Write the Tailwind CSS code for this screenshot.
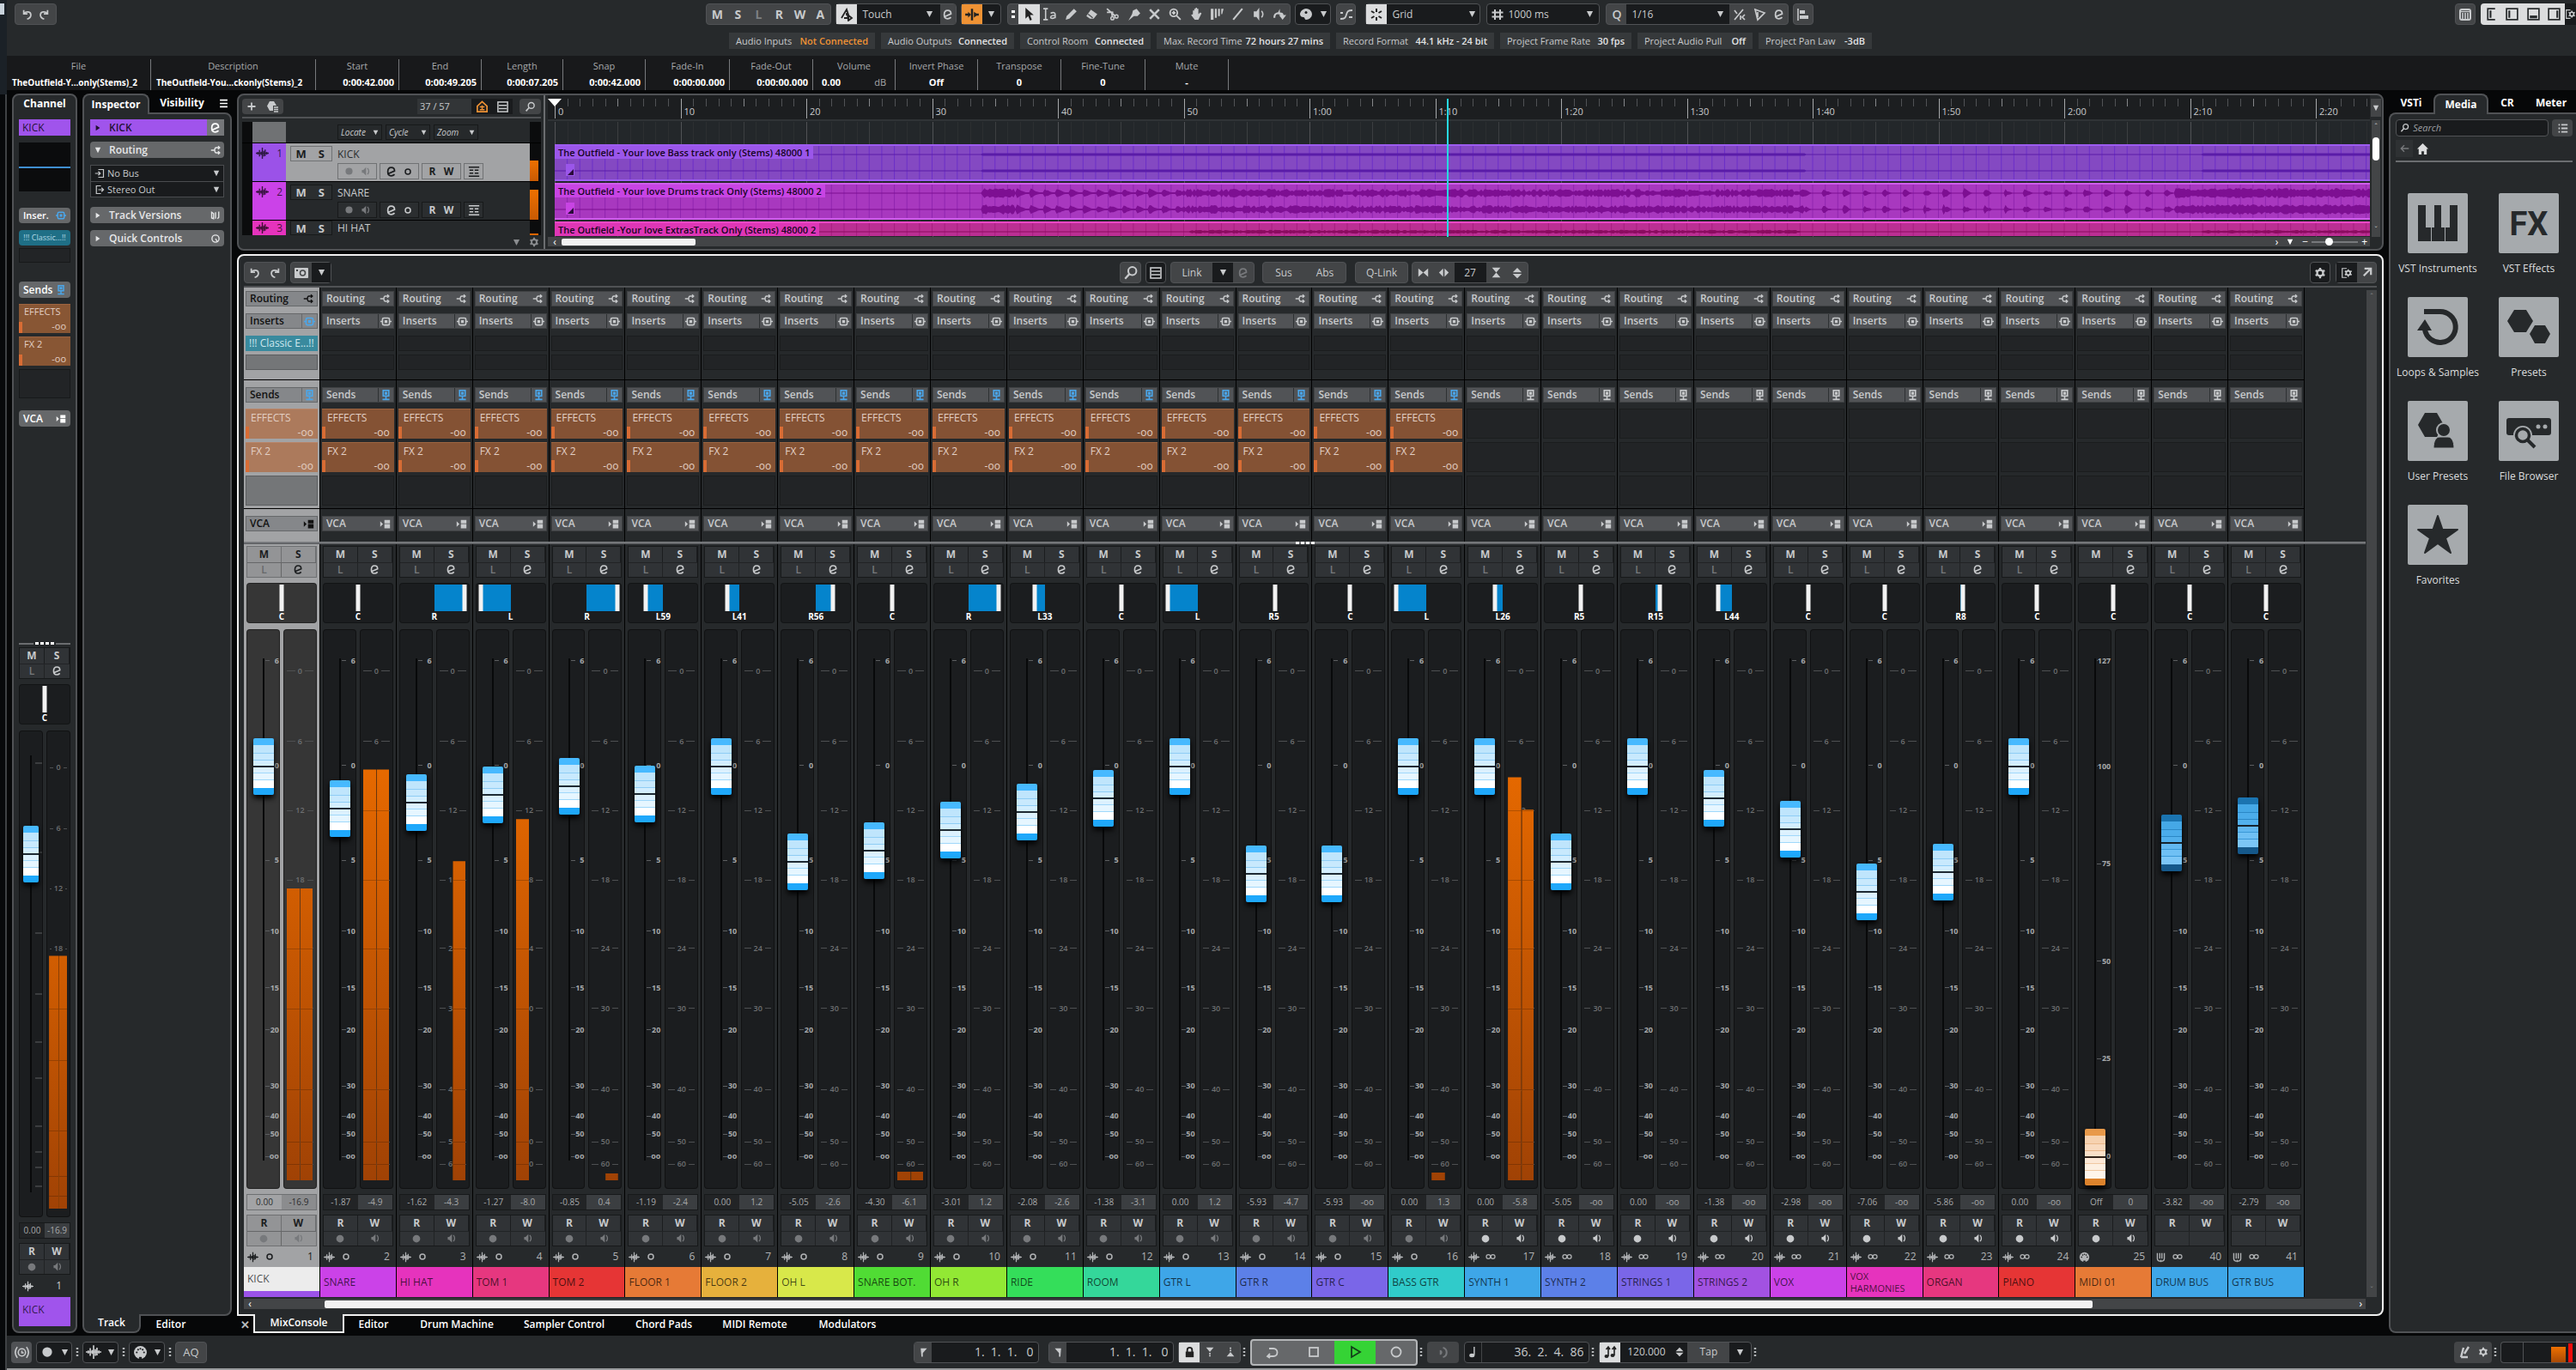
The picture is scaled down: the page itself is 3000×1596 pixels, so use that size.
<!DOCTYPE html>
<html lang="en">
<head>
    <meta charset="UTF-8">
    <meta name="viewport" content="width=device-width, initial-scale=1.0">
    <title>MixConsole</title>
    <script src="https://cdn.jsdelivr.net/npm/@tailwindcss/browser@4"></script>
</head>
<body class="flex h-screen min-h-[1100px] overflow-hidden bg-[#060708] font-['Open_Sans','Noto_Sans',sans-serif] text-[12px] leading-4 text-[#c8cacc]">

    <!-- Icon set -->
    <svg width="0" height="0" class="absolute" aria-hidden="true">
        <symbol id="undo" viewBox="0 0 16 16"><path d="M3 2v5h5M3.500 6.500C6 3.500 12.500 3.500 12.500 8.500c0 3-2 4.500-5 5.500" fill="none" stroke="currentColor" stroke-width="2"/></symbol>
        <symbol id="redo" viewBox="0 0 16 16"><path d="M13 2v5H8M12.500 6.500C10 3.500 3.500 3.500 3.500 8.500c0 3 2 4.500 5 5.500" fill="none" stroke="currentColor" stroke-width="2"/></symbol>
        <symbol id="edit" viewBox="0 0 16 16"><path d="M4 10.500l8-3.500c0-3-2-4.500-4.300-4.500C4.800 2.500 3 5 3 8.300s1.800 5.200 4.500 5.200c2 0 3.300-.8 4.500-2" fill="none" stroke="currentColor" stroke-width="2"/></symbol>
        <symbol id="down" viewBox="0 0 10 10"><path d="M1 1h8L5 9z" fill="currentColor"/></symbol>
        <symbol id="right" viewBox="0 0 10 10"><path d="M2 1v8l6-4z" fill="currentColor"/></symbol>
        <symbol id="auto" viewBox="0 0 16 16"><path d="M2 12L8 2l3 9M5 12h6M8 6v3M9 8l5 4-4 3z" fill="none" stroke="currentColor" stroke-width="1.800"/></symbol>
        <symbol id="scroll" viewBox="0 0 16 16"><path d="M8 2v12M1 8h4M11 8h4" stroke="currentColor" stroke-width="2.200"/><path d="M4 5l3 3-3 3zM10 5l4 3-4 3z" fill="currentColor"/></symbol>
        <symbol id="pointer" viewBox="0 0 16 16"><path d="M4 1v12l3-3 2 5 2-1-2-5h4z" fill="currentColor"/></symbol>
        <symbol id="range" viewBox="0 0 16 16"><path d="M1 2h5M1 14h5M3.500 2v12" stroke="currentColor" stroke-width="1.500"/><path d="M9 7c3-1.500 5-.5 5 1.500v4M14 9.500c-3-.5-5 .5-5 2s3.500 1.500 5-.5" fill="none" stroke="currentColor" stroke-width="1.500"/></symbol>
        <symbol id="pencil" viewBox="0 0 16 16"><path d="M2 14l1-4 8-8 3 3-8 8z" fill="currentColor"/></symbol>
        <symbol id="eraser" viewBox="0 0 16 16"><path d="M7 3l7 5-4 5H6L2 10z" fill="currentColor"/><path d="M4 8l5 4" stroke="#434547" stroke-width="1.200"/></symbol>
        <symbol id="scissors" viewBox="0 0 16 16"><path d="M2 2l9 8M2 6l7 0M7 5l1 6" stroke="currentColor" stroke-width="1.800" fill="none"/><circle cx="8" cy="12.500" r="1.700" fill="none" stroke="currentColor" stroke-width="1.400"/><circle cx="12.500" cy="10.500" r="1.700" fill="none" stroke="currentColor" stroke-width="1.400"/></symbol>
        <symbol id="glue" viewBox="0 0 16 16"><path d="M7 4l4-2 4 5-3 3H8L2 15l4-7z" fill="currentColor"/></symbol>
        <symbol id="cross" viewBox="0 0 16 16"><path d="M3 3l10 10M13 3L3 13" stroke="currentColor" stroke-width="2.400"/></symbol>
        <symbol id="zoom" viewBox="0 0 16 16"><circle cx="6.500" cy="6.500" r="4" fill="none" stroke="currentColor" stroke-width="1.800"/><path d="M9.500 9.500L14 14M4.500 6.500h4M6.500 4.500v4" stroke="currentColor" stroke-width="1.800"/></symbol>
        <symbol id="hand" viewBox="0 0 16 16"><path d="M4 8V4h1.500v3V2H7v5V1h1.500v6V2H10v6l2-2 1.500 1L10 14H6L2 9z" fill="currentColor"/></symbol>
        <symbol id="comp" viewBox="0 0 16 16"><path d="M1 2h3v12H1zM5.500 2h2v10h-2zM9 2h2v8H9zM12.500 2H15l-1.500 6h-1z" fill="currentColor"/></symbol>
        <symbol id="line" viewBox="0 0 16 16"><path d="M3 14L13 2" stroke="currentColor" stroke-width="2"/></symbol>
        <symbol id="speaker" viewBox="0 0 16 16"><path d="M2 5h3l3-4v14l-3-4H2z" fill="currentColor"/><path d="M10.500 4.500c2 2 2 5 0 7" fill="none" stroke="currentColor" stroke-width="1.500"/></symbol>
        <symbol id="warp" viewBox="0 0 16 16"><path d="M1 12c0-4 2-6 5-6l2-4v4c3 0 4 1 4 3h3l-4 5-4-5h2c-4-2-6-1-6 3z" fill="currentColor"/></symbol>
        <symbol id="palette" viewBox="0 0 16 16"><path d="M8 1a7 6.500 0 0 1 0 13c-2 0-1-3-3-3s-4-1-4-3.500S4 1 8 1z" fill="currentColor"/><circle cx="8" cy="5.500" r="1.500" fill="#191b1d"/></symbol>
        <symbol id="cross2" viewBox="0 0 16 16"><path d="M1 13c5 0 6-1 7-5s2-5 7-5M1 6h3M11 11h4" fill="none" stroke="currentColor" stroke-width="1.800"/></symbol>
        <symbol id="snap" viewBox="0 0 16 16"><path d="M8 1v4M8 11v4M2 4l3.500 2M14 4l-3.500 2M2 12l3.500-2M14 12l-3.500-2" stroke="currentColor" stroke-width="2"/></symbol>
        <symbol id="hash" viewBox="0 0 16 16"><path d="M5 2v12M11 2v12M1.500 5.500h13M1.500 10.500h13" stroke="currentColor" stroke-width="2"/></symbol>
        <symbol id="slash" viewBox="0 0 16 16"><path d="M2 14L12 2M2 3l3 4M9 9v5M14 8l-3 3 3 3" stroke="currentColor" stroke-width="1.700" fill="none"/></symbol>
        <symbol id="tri" viewBox="0 0 16 16"><path d="M3 2l11 4-8 8zM6 5v6" fill="none" stroke="currentColor" stroke-width="1.700"/></symbol>
        <symbol id="align" viewBox="0 0 16 16"><path d="M2 1v14" stroke="currentColor" stroke-width="1.600"/><path d="M4 3h6v4H4zM4 9h10v4H4z" fill="currentColor"/></symbol>
        <symbol id="keys" viewBox="0 0 16 16"><rect x="2" y="2" width="12" height="12" rx="2" fill="none" stroke="currentColor" stroke-width="2"/><path d="M5 6v7M8 6v7M11 6v7M3 4.500h10" stroke="currentColor" stroke-width="1.600"/></symbol>
        <symbol id="zoneL" viewBox="0 0 16 16"><path d="M12 2H4v12h8" fill="none" stroke="currentColor" stroke-width="1.600"/><path d="M7 4v8" stroke="currentColor" stroke-width="2"/></symbol>
        <symbol id="zoneI" viewBox="0 0 16 16"><rect x="2" y="2" width="12" height="12" fill="none" stroke="currentColor" stroke-width="1.600"/><path d="M5 4v8" stroke="currentColor" stroke-width="2"/></symbol>
        <symbol id="zoneB" viewBox="0 0 16 16"><rect x="2" y="2" width="12" height="12" fill="none" stroke="currentColor" stroke-width="1.600"/><path d="M4 11h8" stroke="currentColor" stroke-width="3"/></symbol>
        <symbol id="zoneR" viewBox="0 0 16 16"><rect x="2" y="2" width="12" height="12" fill="none" stroke="currentColor" stroke-width="1.600"/><path d="M11.500 4v8" stroke="currentColor" stroke-width="2"/></symbol>
        <symbol id="gear" viewBox="0 0 16 16"><circle cx="8" cy="8" r="4" fill="none" stroke="currentColor" stroke-width="2.600"/><path d="M8 1v3M8 12v3M2 4.500L4.500 6M11.500 10l2.500 1.500M2 11.500L4.500 10M11.500 6L14 4.500" stroke="currentColor" stroke-width="2.600"/></symbol>
        <symbol id="panelgear" viewBox="0 0 16 16"><path d="M8 2H2v12h6" fill="none" stroke="currentColor" stroke-width="1.400"/><circle cx="10" cy="8" r="2.800" fill="none" stroke="currentColor" stroke-width="2"/><path d="M10 3v2M10 11v2M5.500 5.500l2 1M12.500 9.500l2 1M5.500 10.500l2-1M12.500 6.500l2-1" stroke="currentColor" stroke-width="1.800"/></symbol>
        <symbol id="search" viewBox="0 0 16 16"><circle cx="9.500" cy="6" r="4.200" fill="none" stroke="currentColor" stroke-width="1.800"/><path d="M6.500 9L2 14" stroke="currentColor" stroke-width="2"/></symbol>
        <symbol id="list" viewBox="0 0 16 16"><rect x="2" y="2" width="12" height="12" fill="none" stroke="currentColor" stroke-width="1.600"/><path d="M3 6h10M3 10h10" stroke="currentColor" stroke-width="1.600"/></symbol>
        <symbol id="bullets" viewBox="0 0 16 16"><path d="M2 3h2M2 8h2M2 13h2M6 3h9M6 8h9M6 13h9" stroke="currentColor" stroke-width="2.200"/></symbol>
        <symbol id="lanes" viewBox="0 0 16 16"><path d="M1 2h14M1 14h14M2 6h5M9 6h5M2 10h5M9 10h5" stroke="currentColor" stroke-width="1.800"/></symbol>
        <symbol id="agent" viewBox="0 0 16 16"><path d="M2 14V7l6-5.500L14 7v7z" fill="none" stroke="currentColor" stroke-width="1.800"/><path d="M5 8h6M8 6v6M5 11.500h6" stroke="currentColor" stroke-width="1.500"/></symbol>
        <symbol id="preset" viewBox="0 0 16 16"><path d="M5 2h5l3 5H9v6H5L2 7.500z" fill="currentColor"/><path d="M10 9h5M10 11.500h5M10 14h5" stroke="currentColor" stroke-width="1.400"/></symbol>
        <symbol id="plus" viewBox="0 0 16 16"><path d="M8 2v12M2 8h12" stroke="currentColor" stroke-width="2.400"/></symbol>
        <symbol id="wave" viewBox="0 0 16 16"><path d="M0 8h16M2.500 6.500v3M4.500 4v8M6.500 6v4M8 1v14M9.800 5v7M11.500 3.500v8M13.500 6.500v3" stroke="currentColor" stroke-width="1.500"/></symbol>
        <symbol id="dot" viewBox="0 0 16 16"><circle cx="8" cy="8" r="5" fill="currentColor"/></symbol>
        <symbol id="mono" viewBox="0 0 16 16"><circle cx="8" cy="8" r="4" fill="none" stroke="currentColor" stroke-width="2"/></symbol>
        <symbol id="stereo" viewBox="0 0 16 16"><circle cx="4.500" cy="8" r="3.200" fill="none" stroke="currentColor" stroke-width="1.700"/><circle cx="11.500" cy="8" r="3.200" fill="none" stroke="currentColor" stroke-width="1.700"/></symbol>
        <symbol id="monitor" viewBox="0 0 16 16"><path d="M3 6h2l4-4v12L5 10H3z" fill="currentColor"/><path d="M11 3.500c2.500 2.500 2.500 6.500 0 9" fill="none" stroke="currentColor" stroke-width="1.600"/></symbol>
        <symbol id="midi" viewBox="0 0 16 16"><circle cx="8" cy="8" r="7" fill="currentColor"/><g fill="#1b1d1f"><circle cx="4" cy="8" r="1"/><circle cx="12" cy="8" r="1"/><circle cx="5.500" cy="5" r="1"/><circle cx="10.500" cy="5" r="1"/><circle cx="8" cy="4" r="1"/><path d="M6.500 13h3v2h-3z"/></g></symbol>
        <symbol id="bus" viewBox="0 0 16 16"><path d="M3 2v8c0 5 10 5 10 0V2M6.500 2v8M9.500 2v8M8 12v3" fill="none" stroke="currentColor" stroke-width="1.700"/></symbol>
        <symbol id="route" viewBox="0 0 16 16"><path d="M1 8h5M14 4H9C6 4 6 12 9 12h5M12 1.500L14.500 4 12 6.500M12 9.500l2.500 2.500-2.500 2.500" fill="none" stroke="currentColor" stroke-width="1.800"/></symbol>
        <symbol id="insert" viewBox="0 0 16 16"><rect x="3" y="3" width="10" height="10" rx="2" fill="none" stroke="currentColor" stroke-width="2"/><path d="M6 6h4v4H6zM0 7h3v2H0zM13 7h3v2h-3z" fill="currentColor"/></symbol>
        <symbol id="send" viewBox="0 0 16 16"><rect x="4" y="1" width="8" height="8" fill="none" stroke="currentColor" stroke-width="2"/><path d="M6 3h4v4H6zM7 9h2v4H7zM3 13h10v2H3z" fill="currentColor"/></symbol>
        <symbol id="vca" viewBox="0 0 16 16"><path d="M1 4v8l4-4zM7 2h8v5H7zM7 8h8v6H7z" fill="currentColor"/></symbol>
        <symbol id="versions" viewBox="0 0 16 16"><path d="M2 3v9l3 1V5zM8 3v10M13 2v9l-2 2" fill="none" stroke="currentColor" stroke-width="1.800"/></symbol>
        <symbol id="knob" viewBox="0 0 16 16"><circle cx="8" cy="8" r="5.500" fill="none" stroke="currentColor" stroke-width="1.800"/><path d="M8 8l3 5" stroke="currentColor" stroke-width="1.800"/></symbol>
        <symbol id="busin" viewBox="0 0 16 16"><path d="M6 2h8v12H6M1 8h8M6 5l3 3-3 3" fill="none" stroke="currentColor" stroke-width="1.600"/></symbol>
        <symbol id="busout" viewBox="0 0 16 16"><path d="M10 2H3v12h7M6 8h8M11 5l3 3-3 3" fill="none" stroke="currentColor" stroke-width="1.600"/></symbol>
        <symbol id="camera" viewBox="0 0 16 16"><rect x="0" y="2" width="16" height="12" rx="1" fill="currentColor"/><circle cx="9.500" cy="8" r="3" fill="none" stroke="#434547" stroke-width="1.500"/><path d="M2 4h2v2H2z" fill="#434547"/></symbol>
        <symbol id="narrow" viewBox="0 0 16 16"><path d="M1 2v12l7-6zM15 2v12L8 8z" fill="currentColor"/></symbol>
        <symbol id="widen" viewBox="0 0 16 16"><path d="M7 2v12L1 8zM9 2v12l6-6z" fill="currentColor"/></symbol>
        <symbol id="updown" viewBox="0 0 16 16"><path d="M2 7h12L8 1zM2 9h12l-6 6z" fill="currentColor"/></symbol>
        <symbol id="outward" viewBox="0 0 16 16"><path d="M4 12L13 3M5 3h8v8" fill="none" stroke="currentColor" stroke-width="2.400"/></symbol>
        <symbol id="home" viewBox="0 0 16 16"><path d="M8 1l7 7h-2v7H9.500v-4h-3v4H3V8H1z" fill="currentColor"/></symbol>
        <symbol id="back" viewBox="0 0 16 16"><path d="M15 8H3M8 3L3 8l5 5" fill="none" stroke="currentColor" stroke-width="1.800"/></symbol>
        <symbol id="clock" viewBox="0 0 16 16"><circle cx="8" cy="8" r="4" fill="none" stroke="currentColor" stroke-width="1.500"/><path d="M8 6v2.500h2M3 2c-3 4-3 8 0 12M13 2c3 4 3 8 0 12" fill="none" stroke="currentColor" stroke-width="1.500"/></symbol>
        <symbol id="locL" viewBox="0 0 16 16"><path d="M4 2h9L7 9v5H5z" fill="currentColor"/></symbol>
        <symbol id="locR" viewBox="0 0 16 16"><path d="M12 2H3l6 7v5h2z" fill="currentColor"/></symbol>
        <symbol id="lock" viewBox="0 0 16 16"><path d="M3 7h10v7H3z" fill="currentColor"/><path d="M5 8V5c0-4 6-4 6 0v3" fill="none" stroke="currentColor" stroke-width="2"/></symbol>
        <symbol id="punchin" viewBox="0 0 16 16"><path d="M3 2h10L8 8zM7 9h2v2H7zM7 12h2v2H7z" fill="currentColor"/></symbol>
        <symbol id="punchout" viewBox="0 0 16 16"><path d="M3 14h10L8 8zM7 5h2v2H7zM7 2h2v2H7z" fill="currentColor"/></symbol>
        <symbol id="cycle" viewBox="0 0 16 16"><path d="M4 4h5c6 0 6 9 0 9H2M5 10l-3 3 3 2" fill="none" stroke="currentColor" stroke-width="1.800"/></symbol>
        <symbol id="stop" viewBox="0 0 16 16"><rect x="3" y="3" width="10" height="10" fill="none" stroke="currentColor" stroke-width="1.800"/></symbol>
        <symbol id="play" viewBox="0 0 16 16"><path d="M4 2l10 6-10 6z" fill="none" stroke="currentColor" stroke-width="1.800"/></symbol>
        <symbol id="rec" viewBox="0 0 16 16"><circle cx="8" cy="8" r="5.500" fill="none" stroke="currentColor" stroke-width="1.800"/></symbol>
        <symbol id="pre" viewBox="0 0 16 16"><path d="M8 2c6 2 6 10 0 12" fill="none" stroke="currentColor" stroke-width="2.200"/><path d="M4 5a3 3 0 0 1 0 6z" fill="currentColor"/></symbol>
        <symbol id="note" viewBox="0 0 16 16"><ellipse cx="6" cy="12.500" rx="3.500" ry="2.500" fill="currentColor"/><path d="M9 12V1" stroke="currentColor" stroke-width="1.600"/></symbol>
        <symbol id="tempo" viewBox="0 0 16 16"><ellipse cx="4" cy="13" rx="2.500" ry="2" fill="currentColor"/><ellipse cx="11" cy="12" rx="2.500" ry="2" fill="currentColor"/><path d="M6 13V2M13 12V2M3.500 5L6 2l2 3M10.500 5L13 2l2 3" fill="none" stroke="currentColor" stroke-width="1.600"/></symbol>
        <symbol id="metro" viewBox="0 0 16 16"><path d="M13 2L8 10M4 14h8M7 3L4 14" fill="none" stroke="currentColor" stroke-width="2.400"/></symbol>
    </svg>

    <!-- Window edge -->
    <div class="flex w-[8px] shrink-0 flex-col bg-[#07090b]">
        <div class="h-[110px] bg-[#1b2127]"><div class="mt-[4px] h-[13px] w-[5px] bg-[#c9d3dc]"></div></div>
        <div class="flex-1 border-r-2 border-[#3f4245]"></div>
    </div>

    <div class="flex min-w-0 flex-1 flex-col">

        <!-- Toolbar -->
        <header class="bg-[#26292b]">
            <div class="grid h-[38px] grid-cols-[27%_auto_1fr] pt-[4px] pl-[9px]">
                <div class="flex h-[25px] w-[49px] items-center justify-around rounded-sm border border-[#505255] bg-[#434547] px-1">
                    <button aria-label="Undo"><svg class="size-[14px]"><use href="#undo"/></svg></button>
                    <button aria-label="Redo"><svg class="size-[14px]"><use href="#redo"/></svg></button>
                </div>
                <div class="flex h-[25px] items-stretch">
                    <div class="mr-[5px] grid w-[146px] grid-cols-6 rounded-sm border border-[#505255] bg-[#434547] text-[14px] font-bold">
                        <button>M</button><button>S</button><button class="text-[#7d8083]">L</button><button>R</button><button>W</button><button>A</button>
                    </div>
                    <div class="mr-[5px] flex w-[141px] rounded-sm border border-[#505255] bg-[#191b1d]">
                        <button aria-label="Automation panel" class="grid w-6 place-items-center bg-[#dcddde] text-[#222]"><svg class="size-4"><use href="#auto"/></svg></button>
                        <select aria-label="Automation mode" class="min-w-0 flex-1 appearance-none bg-transparent pl-[6px]"><option>Touch</option></select>
                        <svg class="mr-2 size-[9px] self-center"><use href="#down"/></svg>
                        <button aria-label="Edit" class="grid w-[18px] place-items-center bg-[#434547]"><svg class="size-[14px]"><use href="#edit"/></svg></button>
                    </div>
                    <div class="mr-[7px] flex w-[47px] rounded-sm border border-[#505255] bg-[#191b1d]">
                        <button aria-label="Auto-scroll" class="grid w-6 place-items-center bg-[#ef9234] text-[#222]"><svg class="size-[18px]"><use href="#scroll"/></svg></button>
                        <button aria-label="Auto-scroll settings" class="grid flex-1 place-items-center"><svg class="size-[9px]"><use href="#down"/></svg></button>
                    </div>
                    <div class="mr-[5px] flex w-[330px] rounded-sm border border-[#505255] bg-[#434547]">
                        <div class="flex w-[12px] flex-col items-center justify-center gap-[3px]"><i class="h-[3px] w-1 bg-white"></i><i class="h-[3px] w-1 bg-white"></i></div>
                        <div id="tools" class="flex flex-1"></div>
                    </div>
                    <div class="mr-[6px] flex w-[42px] items-center justify-around rounded-sm border border-[#505255] bg-[#191b1d]">
                        <button aria-label="Colour"><svg class="size-[16px]"><use href="#palette"/></svg></button>
                        <svg class="size-[9px]"><use href="#down"/></svg>
                    </div>
                    <button aria-label="Snap to zero crossing" class="mr-[11px] grid w-[23px] place-items-center rounded-sm border border-[#505255] bg-[#434547]"><svg class="size-4"><use href="#cross2"/></svg></button>
                    <div class="mr-[7px] flex w-[134px] rounded-sm border border-[#505255] bg-[#191b1d]">
                        <button aria-label="Snap" class="grid w-6 place-items-center bg-[#dcddde] text-[#222]"><svg class="size-4"><use href="#snap"/></svg></button>
                        <select aria-label="Snap type" class="min-w-0 flex-1 appearance-none bg-transparent pl-[6px]"><option>Grid</option></select>
                        <svg class="mr-1 size-[9px] self-center"><use href="#down"/></svg>
                    </div>
                    <div class="mr-[7px] flex w-[132px] items-center rounded-sm border border-[#505255] bg-[#191b1d] pl-1">
                        <svg class="size-4"><use href="#hash"/></svg>
                        <select aria-label="Grid type" class="min-w-0 flex-1 appearance-none bg-transparent pl-1"><option>1000 ms</option></select>
                        <svg class="mr-[6px] size-[9px]"><use href="#down"/></svg>
                    </div>
                    <div class="mr-[5px] flex w-[213px] rounded-sm border border-[#505255] bg-[#434547]">
                        <button class="w-[23px] text-[14px] font-semibold">Q</button>
                        <div class="flex flex-1 items-center bg-[#191b1d]">
                            <select aria-label="Quantize preset" class="min-w-0 flex-1 appearance-none bg-transparent pl-[6px]"><option>1/16</option></select>
                            <svg class="mr-[6px] size-[9px]"><use href="#down"/></svg>
                        </div>
                        <div class="flex w-[68px] items-center justify-around">
                            <button aria-label="Soft quantize"><svg class="size-4"><use href="#slash"/></svg></button>
                            <button aria-label="Iterative quantize"><svg class="size-4"><use href="#tri"/></svg></button>
                            <button aria-label="Quantize panel"><svg class="size-[14px]"><use href="#edit"/></svg></button>
                        </div>
                    </div>
                    <button aria-label="Align" class="grid w-[24px] place-items-center rounded-sm border border-[#505255] bg-[#434547]"><svg class="size-4"><use href="#align"/></svg></button>
                </div>
                <div class="flex h-[25px] justify-end">
                    <button aria-label="On-screen keyboard" class="mr-[6px] grid w-[24px] place-items-center rounded-sm border border-[#505255] bg-[#434547]"><svg class="size-4"><use href="#keys"/></svg></button>
                    <div class="flex w-[98px] items-center justify-around rounded-l-sm bg-[#dcddde] text-[#26292b]">
                        <button aria-label="Left zone"><svg class="size-[17px]"><use href="#zoneL"/></svg></button>
                        <button aria-label="Inspector zone"><svg class="size-[17px]"><use href="#zoneI"/></svg></button>
                        <button aria-label="Lower zone"><svg class="size-[17px]"><use href="#zoneB"/></svg></button>
                        <button aria-label="Right zone"><svg class="size-[17px]"><use href="#zoneR"/></svg></button>
                    </div>
                    <button aria-label="Window layout" class="grid w-[13px] place-items-center overflow-hidden bg-[#191b1d]"><svg class="size-[13px]"><use href="#panelgear"/></svg></button>
                </div>
            </div>
            <dl id="status" class="flex h-[27px] gap-[7px] pl-[841px]"></dl>
        </header>

        <!-- Info line -->
        <dl id="infoline" class="flex h-[40px] shrink-0 bg-[#18191b] pt-[4px]"></dl>

        <!-- Zones -->
        <main class="flex min-h-0 flex-1 gap-[6px] pt-[4px] pb-[3px] pl-[6px]">

            <!-- Channel -->
            <section class="flex w-[76px] shrink-0 flex-col rounded-lg border-2 border-[#505255] bg-[#26292b] px-[6px] pb-[6px]">
                <h2 class="-mx-[6px] h-[28px] pt-[2px] text-center font-bold text-white">Channel</h2>
                <div class="h-[19px] bg-[#a054ec] pl-1 leading-[19px] text-black/80">KICK</div>
                <div class="mt-[8px] h-[57px] bg-[#0b0c0d] pt-[28px]"><div class="h-[2px] bg-[#3f8fd0]"></div></div>
                <div class="mt-[19px] flex h-[18px] items-center justify-between rounded-sm bg-[#66686a] px-[5px] text-[11px] font-semibold text-white">Inser.<svg class="size-3 text-[#4ba6ea]"><use href="#insert"/></svg></div>
                <div class="mt-[8px] h-[18px] rounded-sm bg-[#1f6f86] text-center text-[9px] leading-[18px] whitespace-nowrap text-[#b5dce6]">!!! Classic...!!</div>
                <div class="mt-[3px] h-[17px] border border-[#17191a] bg-[#222426]"></div>
                <div class="mt-[22px] flex h-[19px] items-center justify-between rounded-sm bg-[#66686a] px-[5px] font-semibold text-white">Sends<svg class="size-3 text-[#4ba6ea]"><use href="#send"/></svg></div>
                <div class="mt-[7px] flex h-[34px] border-t border-[#9c6440] bg-[#885634] text-[11px] text-[#e2cfc4]"><i class="mt-[20px] w-[4px] bg-[#d86c34]"></i><div class="flex flex-1 flex-col justify-between pr-[5px] pl-[2px]"><span>EFFECTS</span><span class="self-end">-oo</span></div></div>
                <div class="mt-[4px] flex h-[34px] border-t border-[#9c6440] bg-[#885634] text-[11px] text-[#e2cfc4]"><i class="mt-[20px] w-[4px] bg-[#d86c34]"></i><div class="flex flex-1 flex-col justify-between pr-[5px] pl-[2px]"><span>FX 2</span><span class="self-end">-oo</span></div></div>
                <div class="mt-[4px] h-[34px] border border-[#17191a] bg-[#222426]"></div>
                <div class="mt-[14px] flex h-[19px] items-center justify-between rounded-sm bg-[#66686a] px-[5px] font-semibold text-white">VCA<svg class="size-3"><use href="#vca"/></svg></div>
                <div class="mt-[251px] mb-[3px] flex h-[3px] items-center gap-[2px]">
                    <i class="h-[2px] flex-1 bg-[#6b6d70]"></i><i class="h-full w-1 bg-white"></i><i class="h-full w-1 bg-white"></i><i class="h-full w-1 bg-white"></i><i class="h-full w-1 bg-white"></i><i class="h-[2px] flex-1 bg-[#6b6d70]"></i>
                </div>
                <div id="channel" class="flex min-h-0 flex-1 flex-col"></div>
            </section>

            <!-- Inspector -->
            <section class="flex w-[174px] shrink-0 flex-col">
                <div class="flex h-[22px] font-bold text-white" role="tablist">
                    <button role="tab" aria-selected="true" class="relative z-10 -mb-[2px] w-[78px] rounded-t-lg border-2 border-b-0 border-[#505255] bg-[#26292b]">Inspector</button>
                    <button role="tab" class="w-[76px]">Visibility</button>
                    <button aria-label="Menu" class="w-[20px]"><svg class="mx-auto size-[11px]" viewBox="0 0 10 10"><path d="M1 1.500h8M1 5h8M1 8.500h8" stroke="currentColor" stroke-width="1.500"/></svg></button>
                </div>
                <div class="flex-1 rounded-tr-lg rounded-br-lg border-2 border-[#505255] bg-[#26292b] px-[7px] pt-[6px] font-semibold text-[#e6e7e8]">
                    <div class="flex h-[19px] items-center bg-[#a054ec] text-black/80">
                        <svg class="mx-[5px] size-[8px]"><use href="#right"/></svg><span class="flex-1 pl-1">KICK</span>
                        <button aria-label="Edit channel" class="grid h-full w-[20px] place-items-center bg-[#75777a] text-white"><svg class="size-[14px]"><use href="#edit"/></svg></button>
                    </div>
                    <button class="mt-[7px] flex h-[19px] w-full items-center rounded-sm bg-[#66686a] pr-1 text-left"><svg class="mx-[5px] size-[8px]"><use href="#down"/></svg><span class="flex-1 pl-1">Routing</span><svg class="size-3"><use href="#route"/></svg></button>
                    <div class="mt-[8px] border border-[#4a4c4f] bg-[#191b1d] text-[11px] font-normal text-[#c8cacc]">
                        <div class="flex h-[18px] items-center px-1"><svg class="size-3"><use href="#busin"/></svg><select aria-label="Input routing" class="flex-1 appearance-none bg-transparent pl-[3px]"><option>No Bus</option></select><svg class="size-[8px]"><use href="#down"/></svg></div>
                        <div class="flex h-[18px] items-center border-t border-[#4a4c4f] px-1"><svg class="size-3"><use href="#busout"/></svg><select aria-label="Output routing" class="flex-1 appearance-none bg-transparent pl-[3px]"><option>Stereo Out</option></select><svg class="size-[8px]"><use href="#down"/></svg></div>
                    </div>
                    <button class="mt-[11px] flex h-[19px] w-full items-center rounded-sm bg-[#66686a] pr-1 text-left"><svg class="mx-[5px] size-[8px]"><use href="#right"/></svg><span class="flex-1 pl-1">Track Versions</span><svg class="size-3"><use href="#versions"/></svg></button>
                    <button class="mt-[8px] flex h-[19px] w-full items-center rounded-sm bg-[#66686a] pr-1 text-left"><svg class="mx-[5px] size-[8px]"><use href="#right"/></svg><span class="flex-1 pl-1">Quick Controls</span><svg class="size-3"><use href="#knob"/></svg></button>
                </div>
                <div class="flex h-[20px] font-semibold text-white" role="tablist">
                    <button role="tab" aria-selected="true" class="relative z-10 -mt-[2px] w-[68px] rounded-b-lg border-2 border-t-0 border-[#505255] bg-[#26292b]">Track</button>
                    <button role="tab" class="w-[70px]">Editor</button>
                </div>
            </section>

            <div class="flex min-w-0 flex-1 flex-col">

                <!-- Project zone -->
                <section class="flex h-[183px] shrink-0 overflow-hidden rounded-lg border-2 border-[#505255] bg-[#26292b]">
                    <div class="flex w-[357px] shrink-0 flex-col border-r-2 border-[#6b6d70] pt-[4px] pr-[3px] pl-[4px]">
                        <div class="flex h-[23px] items-start border-b-2 border-[#505255] pb-1">
                            <div class="flex h-[18px] w-[48px] items-center justify-around rounded-sm bg-[#434547]">
                                <button aria-label="Add track"><svg class="size-3"><use href="#plus"/></svg></button>
                                <button aria-label="Track presets"><svg class="size-[16px]"><use href="#preset"/></svg></button>
                            </div>
                            <div class="ml-auto flex h-[18px] w-[111px] items-center bg-[#323537] pl-[3px] text-[11px]">
                                <span class="flex-1">37 / 57</span>
                                <button aria-label="Visibility agent" class="grid h-full w-6 place-items-center bg-[#191b1d] text-[#ef9234]"><svg class="size-[15px]"><use href="#agent"/></svg></button>
                                <button aria-label="Divide list" class="grid h-full w-6 place-items-center bg-[#191b1d]"><svg class="size-[15px]"><use href="#list"/></svg></button>
                            </div>
                            <button aria-label="Find track" class="ml-[8px] grid h-[18px] w-[25px] place-items-center rounded-sm bg-[#434547]"><svg class="size-[13px]"><use href="#search"/></svg></button>
                        </div>
                        <div class="mt-[4px] flex h-[25px] border-b border-black bg-[#0b0c0d] pr-[3px] pl-[12px]">
                            <div class="w-[39px] bg-[#707274]"></div>
                            <div class="flex flex-1 items-center gap-[4px] bg-[#26292b] pl-[60px] text-[10px] italic">
                                <button class="flex h-[18px] w-[52px] items-center justify-between border border-[#17191a] px-[3px]">Locate<svg class="size-[7px]"><use href="#down"/></svg></button>
                                <button class="flex h-[18px] w-[52px] items-center justify-between border border-[#17191a] px-[3px]">Cycle<svg class="size-[7px]"><use href="#down"/></svg></button>
                                <button class="flex h-[18px] w-[52px] items-center justify-between border border-[#17191a] px-[3px]">Zoom<svg class="size-[7px]"><use href="#down"/></svg></button>
                            </div>
                            <div class="w-[10px]"></div>
                        </div>
                        <div id="tracks" class="h-[107px] shrink-0 overflow-hidden bg-[#0b0c0d] pr-[3px] pl-[12px]"></div>
                        <div class="flex flex-1 items-center justify-end gap-[10px] pr-[2px] text-[#8a8c8f]"><svg class="size-[9px]"><use href="#down"/></svg><svg class="size-3"><use href="#gear"/></svg></div>
                    </div>
                    <div class="relative flex min-w-0 flex-1 flex-col pl-[3px]">
                        <div id="timeline" class="relative flex-1 overflow-hidden bg-[#1c1e20]"></div>
                        <div class="flex h-[11px] items-center bg-[#434547] pr-[3px] text-white">
                            <span class="w-[16px] text-center leading-3">‹</span>
                            <div class="h-[8px] w-[156px] rounded-xs bg-[#f2f2f2]"></div>
                            <span class="ml-auto leading-3">›</span>
                            <svg class="mx-[10px] size-[8px]"><use href="#down"/></svg>
                            <span class="leading-3">−</span>
                            <input aria-label="Horizontal zoom" type="range" min="0" max="100" value="36" class="mx-1 h-[2px] w-[54px] appearance-none bg-[#77797c] [&::-webkit-slider-thumb]:size-[9px] [&::-webkit-slider-thumb]:appearance-none [&::-webkit-slider-thumb]:rounded-full [&::-webkit-slider-thumb]:bg-white">
                            <span class="leading-3">+</span>
                        </div>
                        <div class="h-[3px]"></div>
                    </div>
                    <div class="flex w-[14px] flex-col items-center pt-[4px] text-[9px]">
                        <button aria-label="Ruler menu" class="grid h-[21px] w-[12px] place-items-center bg-[#434547]"><svg class="size-[8px]"><use href="#down"/></svg></button>
                        <div class="mt-[4px] flex h-[136px] w-[10px] flex-col items-center bg-[#434547]"><span>ˆ</span><div class="mt-[4px] h-[27px] w-[8px] rounded-sm bg-white"></div><span class="mt-auto">ˇ</span></div>
                    </div>
                </section>

                <!-- MixConsole -->
                <section class="mt-[4px] flex min-h-0 flex-1 flex-col rounded-lg rounded-bl-none border-2 border-[#f0f0f0] bg-[#26292b] pr-[6px] pl-[6px]">
                    <div class="grid h-[37px] shrink-0 grid-cols-[1fr_auto_1fr] border-b-2 border-[#505255] pt-[7px]">
                        <div class="flex h-[25px] gap-[5px]">
                            <div class="flex w-[49px] items-center justify-around rounded-sm border border-[#505255] bg-[#434547]">
                                <button aria-label="Undo mix"><svg class="size-[14px]"><use href="#undo"/></svg></button>
                                <button aria-label="Redo mix"><svg class="size-[14px]"><use href="#redo"/></svg></button>
                            </div>
                            <div class="flex w-[48px] rounded-sm border border-[#505255] bg-[#434547]">
                                <button aria-label="Snapshot" class="grid w-6 place-items-center"><svg class="size-4"><use href="#camera"/></svg></button>
                                <button aria-label="Snapshot list" class="grid flex-1 place-items-center bg-[#191b1d]"><svg class="size-[9px]"><use href="#down"/></svg></button>
                            </div>
                        </div>
                        <div class="ml-8 flex h-[25px]">
                            <button aria-label="Find channel" class="mr-[5px] grid w-[25px] place-items-center rounded-sm border border-[#505255] bg-[#434547]"><svg class="size-[18px]"><use href="#search"/></svg></button>
                            <button aria-label="Racks" class="mr-[5px] grid w-[24px] place-items-center rounded-sm border border-[#505255] bg-[#191b1d]"><svg class="size-4"><use href="#list"/></svg></button>
                            <div class="mr-[9px] flex w-[98px] rounded-sm border border-[#505255] bg-[#434547]">
                                <button class="w-[48px]">Link</button>
                                <button aria-label="Link options" class="grid w-6 place-items-center bg-[#191b1d]"><svg class="size-[9px]"><use href="#down"/></svg></button>
                                <button aria-label="Edit link" class="grid flex-1 place-items-center text-[#77797c]"><svg class="size-[14px]"><use href="#edit"/></svg></button>
                            </div>
                            <div class="mr-[10px] grid w-[98px] grid-cols-2 rounded-sm border border-[#505255] bg-[#434547]"><button>Sus</button><button>Abs</button></div>
                            <button class="mr-[4px] w-[62px] rounded-sm border border-[#505255] bg-[#434547]">Q-Link</button>
                            <div class="flex w-[136px] rounded-sm border border-[#505255] bg-[#434547]">
                                <button aria-label="Narrower" class="grid flex-1 place-items-center"><svg class="size-[13px]"><use href="#narrow"/></svg></button>
                                <button aria-label="Wider" class="grid flex-1 place-items-center"><svg class="size-[13px]"><use href="#widen"/></svg></button>
                                <span class="w-[37px] bg-[#191b1d] text-center leading-[23px]">27</span>
                                <button aria-label="Shorter" class="grid flex-1 place-items-center"><svg class="size-[13px] rotate-90"><use href="#narrow"/></svg></button>
                                <button aria-label="Taller" class="grid flex-1 place-items-center"><svg class="size-[14px]"><use href="#updown"/></svg></button>
                            </div>
                        </div>
                        <div class="flex h-[25px] justify-end gap-[6px]">
                            <button aria-label="Setup" class="grid w-[24px] place-items-center rounded-sm border border-[#505255] bg-[#191b1d]"><svg class="size-[14px]"><use href="#gear"/></svg></button>
                            <div class="flex w-[48px] rounded-sm border border-[#505255] bg-[#434547]">
                                <button aria-label="Functions" class="grid w-6 place-items-center bg-[#191b1d]"><svg class="size-[14px]"><use href="#panelgear"/></svg></button>
                                <button aria-label="Open in window" class="grid flex-1 place-items-center"><svg class="size-[15px]"><use href="#outward"/></svg></button>
                            </div>
                        </div>
                    </div>
                    <div class="flex min-h-0 flex-1">
                        <div class="flex min-w-0 flex-1 flex-col">
                            <div id="racks" class="grid shrink-0 grid-cols-[repeat(27,minmax(0,1fr))] pr-[71px]"></div>
                            <div class="flex h-[3px] shrink-0 items-center justify-center gap-[2px] bg-[linear-gradient(#85878a,#55575a)]"><i class="h-full w-1 bg-white"></i><i class="h-full w-1 bg-white"></i><i class="h-full w-1 bg-white"></i><i class="h-full w-1 bg-white"></i></div>
                            <div id="faders" class="grid min-h-0 flex-1 grid-cols-[repeat(27,minmax(0,1fr))] pr-[71px]"></div>
                        </div>
                        <div class="mt-[3px] ml-px flex w-[12px] flex-col items-center justify-between bg-[#434547] text-[9px] text-[#85878a]"><span>ˆ</span><span>ˇ</span></div>
                    </div>
                    <div class="mt-[2px] mr-[13px] mb-[6px] flex h-[12px] shrink-0 items-center bg-[#434547] text-white">
                        <span class="w-[14px] text-center leading-3">‹</span>
                        <div class="mr-[310px] ml-[80px] h-[9px] flex-1 rounded-xs bg-[#f2f2f2]"></div>
                        <span class="pr-1 leading-3">›</span>
                    </div>
                </section>
                <nav class="flex h-[20px] shrink-0 font-semibold text-white" role="tablist">
                    <button aria-label="Close" class="w-[19px] text-[13px] text-[#b8babc]">✕</button>
                    <button role="tab" aria-selected="true" class="relative z-10 -mt-[2px] w-[106px] border-2 border-t-0 border-[#f0f0f0] bg-[#26292b]">MixConsole</button>
                    <button role="tab" class="w-[68px]">Editor</button>
                    <button role="tab" class="w-[126px]">Drum Machine</button>
                    <button role="tab" class="w-[124px]">Sampler Control</button>
                    <button role="tab" class="w-[108px]">Chord Pads</button>
                    <button role="tab" class="w-[104px]">MIDI Remote</button>
                    <button role="tab" class="w-[112px]">Modulators</button>
                </nav>
            </div>

            <!-- Media -->
            <section class="flex w-[218px] shrink-0 flex-col">
                <div class="flex h-[22px] font-bold text-white" role="tablist">
                    <button role="tab" class="w-[52px]">VSTi</button>
                    <button role="tab" aria-selected="true" class="relative z-10 -mb-[2px] w-[64px] rounded-t-lg border-2 border-b-0 border-[#505255] bg-[#26292b]">Media</button>
                    <button role="tab" class="w-[44px]">CR</button>
                    <button role="tab" class="flex-1">Meter</button>
                </div>
                <div class="flex-1 rounded-l-lg border-2 border-r-0 border-[#505255] bg-[#26292b] pt-[6px] pl-[6px]">
                    <div class="flex h-[20px] gap-[4px] pr-1">
                        <label class="flex flex-1 items-center rounded-sm border border-[#505255] bg-[#191b1d] pl-1">
                            <svg class="size-3"><use href="#search"/></svg>
                            <input type="search" aria-label="Search" placeholder="Search" class="w-full bg-transparent pl-1 text-[11px] italic outline-none placeholder:text-[#9c9ea1]">
                        </label>
                        <button aria-label="List view" class="grid w-[24px] place-items-center rounded-sm bg-[#434547]"><svg class="size-[13px]"><use href="#bullets"/></svg></button>
                    </div>
                    <div class="mr-1 flex h-[30px] items-center gap-[4px] border-b-2 border-[#6b6d70]">
                        <button aria-label="Back" class="grid h-[20px] w-[20px] place-items-center bg-[#2e3133] text-[#77797c]"><svg class="size-3"><use href="#back"/></svg></button>
                        <button aria-label="Home"><svg class="size-[15px] text-[#dcddde]"><use href="#home"/></svg></button>
                    </div>
                    <div id="media" class="-ml-[4px] grid grid-cols-[106px_106px] pt-[36px] text-[#dcddde]"></div>
                </div>
            </section>
        </main>

        <!-- Transport -->
        <footer class="grid h-[40px] shrink-0 grid-cols-[35.2%_auto_1fr] items-center border-b-2 border-[#9a9c9e] bg-[#26292b] pl-[5px]">
            <div class="flex h-[25px]">
                <button aria-label="Constrain delay" class="mr-[5px] grid w-[24px] place-items-center rounded-sm bg-[#505255]"><svg class="size-[17px]"><use href="#clock"/></svg></button>
                <button aria-label="Record mode" class="flex w-[42px] items-center justify-around rounded-sm border border-[#505255] bg-[#191b1d]"><svg class="size-[18px]"><use href="#dot"/></svg><svg class="size-[9px]"><use href="#down"/></svg></button>
                <i class="mx-[2px] my-[6px] w-[8px] bg-[radial-gradient(#c8cacc_1px,transparent_2px)] bg-[length:8px_4px]"></i>
                <button aria-label="Audio record mode" class="flex w-[42px] items-center justify-around rounded-sm border border-[#505255] bg-[#191b1d]"><svg class="size-[18px]"><use href="#wave"/></svg><svg class="size-[9px]"><use href="#down"/></svg></button>
                <i class="mx-[2px] my-[6px] w-[8px] bg-[radial-gradient(#c8cacc_1px,transparent_2px)] bg-[length:8px_4px]"></i>
                <button aria-label="MIDI record mode" class="flex w-[42px] items-center justify-around rounded-sm border border-[#505255] bg-[#191b1d]"><svg class="size-[17px]"><use href="#midi"/></svg><svg class="size-[9px]"><use href="#down"/></svg></button>
                <i class="mx-[2px] my-[6px] w-[8px] bg-[radial-gradient(#c8cacc_1px,transparent_2px)] bg-[length:8px_4px]"></i>
                <button class="w-[37px] rounded-sm border border-[#505255] bg-[#434547] text-[13px]">AQ</button>
            </div>
            <div class="flex h-[31px] items-center text-[14px]">
                <div class="mr-[11px] flex h-[25px] w-[146px] rounded-sm border border-[#505255] bg-[#191b1d]"><button aria-label="To left locator" class="grid w-[23px] place-items-center bg-[#434547]"><svg class="size-[13px]"><use href="#locL"/></svg></button><input aria-label="Left locator" value="1.  1.  1.   0" class="w-full min-w-0 bg-transparent pr-[6px] text-right"></div>
                <div class="mr-[5px] flex h-[25px] w-[146px] rounded-sm border border-[#505255] bg-[#191b1d]"><button aria-label="To right locator" class="grid w-[23px] place-items-center bg-[#434547]"><svg class="size-[13px]"><use href="#locR"/></svg></button><input aria-label="Right locator" value="1.  1.  1.   0" class="w-full min-w-0 bg-transparent pr-[6px] text-right"></div>
                <div class="flex h-[25px] w-[73px] rounded-sm border border-[#505255] bg-[#434547]">
                    <button aria-label="Lock punch" class="grid w-[24px] place-items-center bg-[#dcddde] text-[#222]"><svg class="size-[15px]"><use href="#lock"/></svg></button>
                    <button aria-label="Punch in" class="grid flex-1 place-items-center"><svg class="size-[14px]"><use href="#punchin"/></svg></button>
                    <button aria-label="Punch out" class="grid flex-1 place-items-center"><svg class="size-[14px]"><use href="#punchout"/></svg></button>
                </div>
                <i class="mr-[3px] h-[12px] w-[8px] bg-[radial-gradient(#c8cacc_1px,transparent_2px)] bg-[length:8px_4px]"></i>
                <div class="grid h-[31px] w-[195px] grid-cols-4 overflow-hidden rounded-sm border-2 border-[#b4b6b8] bg-[#66686a]">
                    <button aria-label="Cycle" class="grid place-items-center"><svg class="size-[16px]"><use href="#cycle"/></svg></button>
                    <button aria-label="Stop" class="grid place-items-center"><svg class="size-[16px]"><use href="#stop"/></svg></button>
                    <button aria-label="Play" class="grid place-items-center bg-[#35d335] text-[#14401a]"><svg class="size-[16px]"><use href="#play"/></svg></button>
                    <button aria-label="Record" class="grid place-items-center"><svg class="size-[16px]"><use href="#rec"/></svg></button>
                </div>
                <i class="mr-[3px] h-[12px] w-[8px] bg-[radial-gradient(#c8cacc_1px,transparent_2px)] bg-[length:8px_4px]"></i>
                <button aria-label="Pre-roll" class="mr-[6px] grid h-[25px] w-[37px] place-items-center rounded-sm bg-[#434547] text-[#77797c]"><svg class="size-[15px]"><use href="#pre"/></svg></button>
                <div class="flex h-[25px] w-[146px] rounded-sm border border-[#505255] bg-[#191b1d]"><span class="grid w-[23px] place-items-center border-r border-[#434547]"><svg class="size-[14px]"><use href="#note"/></svg></span><input aria-label="Position" value="36.  2.  4.  86" class="w-full min-w-0 bg-transparent pr-[6px] text-right"></div>
                <i class="mr-[3px] h-[12px] w-[8px] bg-[radial-gradient(#c8cacc_1px,transparent_2px)] bg-[length:8px_4px]"></i>
                <div class="flex h-[25px] w-[178px] items-stretch rounded-sm border border-[#505255] bg-[#191b1d] text-[12px]">
                    <button aria-label="Tempo track" class="grid w-[24px] place-items-center bg-[#dcddde] text-[#222]"><svg class="size-[16px]"><use href="#tempo"/></svg></button>
                    <input aria-label="Tempo" value="120.000" class="w-[60px] bg-transparent text-center">
                    <svg class="mx-[3px] size-[12px] self-center"><use href="#updown"/></svg>
                    <button class="w-[49px] bg-[#434547]">Tap</button>
                    <button aria-label="Tempo menu" class="grid flex-1 place-items-center"><svg class="size-[9px]"><use href="#down"/></svg></button>
                </div>
                <i class="h-[12px] w-[8px] bg-[radial-gradient(#c8cacc_1px,transparent_2px)] bg-[length:8px_4px]"></i>
            </div>
            <div class="flex h-[25px] justify-end">
                <div class="flex w-[44px] items-center justify-around rounded-sm bg-[#434547]">
                    <button aria-label="Metronome"><svg class="size-[16px]"><use href="#metro"/></svg></button>
                    <button aria-label="Click setup"><svg class="size-[12px]"><use href="#gear"/></svg></button>
                </div>
                <i class="mr-[2px] my-[6px] w-[8px] bg-[radial-gradient(#c8cacc_1px,transparent_2px)] bg-[length:8px_4px]"></i>
                <div class="flex w-[88px] items-end rounded-l-sm border border-r-0 border-[#505255] bg-[#191b1d] pr-[4px]">
                    <div class="h-full w-[26px] border-r border-[#505255]"></div>
                    <div class="ml-auto h-[18px] w-[17px] bg-[linear-gradient(#ee7000,#a84a06)]"></div>
                    <div class="ml-[3px] h-[22px] w-[5px] bg-[#f00c0c]"></div>
                </div>
            </div>
        </footer>
    </div>

    <script>
        const svg = (name, cls) => `<svg class="${cls}"><use href="#${name}"/></svg>`;

        const channels = [
            // name, colour, pan, volume, peak, fader y, meters [left, right], number
            ['KICK', '#9b52e8', 'C', '0.00', '-16.9', 893, [1035, 1035], 1],
            ['SNARE', '#cb42e8', 'C', '-1.87', '-4.9', 942, [896, 896], 2],
            ['HI HAT', '#e633bd', 'R', '-1.62', '-4.3', 935, [0, 1003], 3],
            ['TOM 1', '#e6377f', 'L', '-1.27', '-8.0', 926, [954, 0], 4],
            ['TOM 2', '#e63535', 'R', '-0.85', '0.4', 916, [0, 1368], 5],
            ['FLOOR 1', '#e67a36', 'L59', '-1.19', '-2.4', 925, [0, 0], 6],
            ['FLOOR 2', '#e6b13c', 'L41', '0.00', '1.2', 893, [0, 0], 7],
            ['OH L', '#d8e84a', 'R56', '-5.05', '-2.6', 1004, [0, 0], 8],
            ['SNARE BOT.', '#50dc34', 'C', '-4.30', '-6.1', 991, [1366, 1366], 9],
            ['OH R', '#92e834', 'R', '-3.01', '1.2', 967, [0, 0], 10],
            ['RIDE', '#34de5a', 'L33', '-2.08', '-2.6', 946, [0, 0], 11],
            ['ROOM', '#34d79a', 'C', '-1.38', '-3.1', 930, [0, 0], 12],
            ['GTR L', '#3ea6e8', 'L', '0.00', '1.2', 893, [0, 0], 13],
            ['GTR R', '#5c80e8', 'R5', '-5.93', '-4.7', 1018, [0, 0], 14],
            ['GTR C', '#7a66e8', 'C', '-5.93', '-oo', 1018, [0, 0], 15],
            ['BASS GTR', '#30cbca', 'L', '0.00', '1.3', 893, [1367, 0], 16],
            ['SYNTH 1', '#3ea6e8', 'L26', '0.00', '-5.8', 893, [905, 943], 17],
            ['SYNTH 2', '#5c80e8', 'R5', '-5.05', '-oo', 1004, [0, 0], 18],
            ['STRINGS 1', '#7a66e8', 'R15', '0.00', '-oo', 893, [0, 0], 19],
            ['STRINGS 2', '#a252e2', 'L44', '-1.38', '-oo', 930, [0, 0], 20],
            ['VOX', '#cb42e8', 'C', '-2.98', '-oo', 966, [0, 0], 21],
            ['VOX HARMONIES', '#e633bd', 'C', '-7.06', '-oo', 1039, [0, 0], 22],
            ['ORGAN', '#e6377f', 'R8', '-5.86', '-oo', 1016, [0, 0], 23],
            ['PIANO', '#e63535', 'C', '0.00', '-oo', 893, [0, 0], 24],
            ['MIDI 01', '#e67a36', 'C', 'Off', '0', 1348, [0, 0], 25],
            ['DRUM BUS', '#3ea6e8', 'C', '-3.82', '-oo', 982, [0, 0], 40],
            ['GTR BUS', '#3ea6e8', 'C', '-2.79', '-oo', 962, [0, 0], 41],
        ];

        const wide = { top: 733, height: 652, fader: y => y, meter: y => y };
        const slim = { top: 850, height: 568, fader: y => 887 + (y - 769) * 0.857, meter: y => 893 + (y - 781.5) * 0.87, slim: true };
        const volumeScale = [['6', 769], ['0', 891], ['5', 1002], ['10', 1085], ['15', 1151], ['20', 1200], ['30', 1266], ['40', 1301], ['50', 1322], ['oo', 1348]];
        const midiScale = [['127', 769], ['100', 892], ['75', 1006], ['50', 1120], ['25', 1234], ['0', 1348]];
        const meterScale = [['0', 781], ['6', 863], ['12', 944], ['18', 1025], ['24', 1105], ['30', 1175], ['40', 1270], ['50', 1331], ['60', 1357]];

        const caps = {
            audio: '[&::-webkit-slider-thumb]:bg-[linear-gradient(#47b9ff_0_8px,#bfe5fc_8px_17px,#8fcdf5_17px_18px,#c8e9fd_18px_25px,#8fcdf5_25px_26px,#d3eefe_26px_32px,#1e2a33_32px_34px,#dcf1fe_34px_40px,#a0d8fa_40px_41px,#e6f6ff_41px_48px,#a0d8fa_48px_49px,#ffffff_49px_58px,#1fa8fb_58px)]',
            bus: '[&::-webkit-slider-thumb]:bg-[linear-gradient(#1b74b0_0_8px,#45a8e6_8px_17px,#2b88c6_17px_18px,#4bacea_18px_25px,#2b88c6_25px_26px,#52b0ec_26px_32px,#16242e_32px_34px,#62b8f0_34px_40px,#3a98d6_40px_41px,#6fc0f4_41px_48px,#3a98d6_48px_49px,#7cc6f6_49px_58px,#15588a_58px)]',
            midi: '[&::-webkit-slider-thumb]:bg-[linear-gradient(#e8994a_0_8px,#f6d2b0_8px_17px,#e9b88a_17px_18px,#f8dabf_18px_25px,#e9b88a_25px_26px,#fae0c8_26px_32px,#33241a_32px_34px,#fce8d6_34px_40px,#f0c8a2_40px_41px,#fdf0e2_41px_48px,#f0c8a2_48px_49px,#fff5ea_49px_58px,#dd832c_58px)]',
        };

        function panBox(pan, sel) {
            const amount = pan === 'C' ? 0 : (pan.slice(1) ? +pan.slice(1) : 100) * (pan[0] === 'L' ? -1 : 1);
            const pos = 50 + amount * 0.45;
            return `<div class="mt-[6px] h-[47px] shrink-0 rounded-sm border border-black/30 ${sel ? 'bg-[#363636]' : 'bg-[#1b1d1f]'} px-px pt-px">
                <div class="relative h-[31px]">
                    <div class="absolute inset-y-0 bg-[#0584cc]" style="left:${Math.min(pos, 50)}%;width:${Math.abs(pos - 50)}%"></div>
                    <div class="absolute inset-y-0 w-[5px] -translate-x-1/2 bg-[#f2f2f2]" style="left:${pos}%"></div>
                </div>
                <div class="text-center text-[10px] leading-[13px] font-bold text-white">${pan}</div>
            </div>`;
        }

        function faderBox(ch, g, sel) {
            const midi = ch[0] === 'MIDI 01', bus = ch[7] > 30;
            const pct = y => (y - g.top) / g.height * 100;
            const bg = sel ? 'bg-[#363636]' : 'bg-[#1b1d1f]';
            const ticks = (midi ? midiScale : volumeScale).map(([t, y]) => `
                <div class="absolute ${g.slim ? 'left-[18px]' : 'left-[21px]'} right-0 flex -translate-y-1/2 items-center justify-between" style="top:${pct(g.fader(y))}%">
                    <i class="h-px ${g.slim ? 'w-[8px]' : 'w-[5px]'} bg-[#5c5e60]"></i>${g.slim ? '' : `<span class="text-[9px] leading-3 font-bold text-[#a6a8aa]">${t}</span>`}
                </div>`).join('');
            const scale = midi ? '' : meterScale.map(([t, y]) => `
                <div class="absolute inset-x-[3px] flex -translate-y-1/2 items-center gap-[3px]" style="top:${pct(g.meter(y))}%">
                    <i class="h-px flex-1 bg-[#4e5052]"></i><span class="text-[9px] leading-3 font-semibold text-[#6e7072]">${t}</span><i class="h-px flex-1 bg-[#4e5052]"></i>
                </div>`).join('');
            const span = g.height - 9;
            const bars = ch[6].map((y, i) => {
                if (!y) return '';
                const top = g.slim ? 1113 : y;
                return `<div class="absolute top-0 bottom-[9px] ${i ? 'right-[10%] left-1/2 border-l border-[#8a3f05]' : 'right-1/2 left-[8%]'} bg-[linear-gradient(#f47300,#e66900_25%,#a04205)]" style="clip-path:inset(${(top - g.top) / span * 100}% 0 0 0)">
                    ${meterScale.map(m => `<i class="absolute inset-x-0 h-px bg-black/20" style="top:${(g.meter(m[1]) - g.top) / span * 100}%"></i>`).join('')}
                </div>`;
            }).join('');
            return `<div class="mt-[7px] grid min-h-0 flex-1 grid-cols-2 gap-[4px]">
                <div class="relative rounded-sm border border-black/40 ${bg}">
                    <div class="absolute top-[5%] bottom-[5%] ${g.slim ? 'left-[12px]' : 'left-[18px]'} w-[2px] bg-[#08090a]"></div>
                    ${ticks}
                    <input type="range" aria-label="${ch[0]} volume" min="0" max="579" value="${1348 - ch[5]}"
                        class="absolute ${g.slim ? 'top-[4px] bottom-[2px] left-[4px] w-[18px]' : 'top-[2px] bottom-[3px] left-[7px] w-[24px]'} m-0 h-auto appearance-none bg-transparent [direction:rtl] [writing-mode:vertical-lr] [&::-webkit-slider-thumb]:h-[66px] ${g.slim ? '[&::-webkit-slider-thumb]:w-[18px]' : '[&::-webkit-slider-thumb]:w-[24px]'} [&::-webkit-slider-thumb]:appearance-none [&::-webkit-slider-thumb]:rounded-xs [&::-webkit-slider-thumb]:shadow-[0_4px_6px_#000000] ${midi ? caps.midi : bus ? caps.bus : caps.audio}">
                </div>
                <div class="relative overflow-hidden rounded-sm border border-black/40 ${bg}">${scale}${bars}</div>
            </div>`;
        }

        function strip(ch, g, sel) {
            const [name, , pan, volume, peak, , , num] = ch;
            const bus = num > 30, midi = name === 'MIDI 01', armed = num >= 17;
            const cell = sel ? 'divide-[#6e7072] border-[#6e7072] bg-[#939496] text-[#1b1d1f]' : 'divide-[#1b1d1f] border-[#17191a] bg-[#303336] text-[#c8cacc]';
            const dim = armed ? '' : 'text-[#77797c]';
            return `
                <div class="grid h-[37px] shrink-0 grid-cols-2 grid-rows-2 divide-x border ${cell} font-bold">
                    <button>M</button><button>S</button>
                    <button class="border-t border-black/30 font-semibold ${sel ? 'text-[#66686a]' : 'text-[#77797c]'}">${midi ? '' : 'L'}</button>
                    <button aria-label="Edit ${name}" class="grid place-items-center border-t border-black/30">${svg('edit', 'size-[13px]')}</button>
                </div>
                ${panBox(pan, sel)}
                ${faderBox(ch, g, sel)}
                <div class="mt-[6px] grid h-[19px] shrink-0 grid-cols-2 border text-center text-[10px] leading-[17px] ${sel ? 'border-[#6e7072] text-[#2b2d2f]' : 'border-[#17191a] text-[#a6a8aa]'}">
                    <span class="${sel ? '' : 'bg-[#222426]'}">${volume}</span><span class="${sel ? 'bg-[#8b8c8e]' : 'bg-[#3b3e41]'}">${peak}</span>
                </div>
                <div class="mt-[5px] grid h-[37px] shrink-0 grid-cols-2 grid-rows-2 divide-x border ${cell} font-bold">
                    <button>R</button><button>W</button>
                    <button aria-label="Record ${name}" class="grid place-items-center border-t border-black/30 ${dim}">${bus ? '' : svg('dot', 'size-[14px]')}</button>
                    <button aria-label="Monitor ${name}" class="grid place-items-center border-t border-black/30 ${dim}">${bus ? '' : svg('monitor', 'size-[13px]')}</button>
                </div>`;
        }

        function rack(ch, i) {
            const sel = i === 0;
            const head = `mx-[2px] flex h-[18px] items-center pl-[4px] text-[12px] font-semibold ${sel ? 'border border-[#66686a] bg-[#85878a] text-[#111]' : 'border border-[#3f4143] bg-[#515356] text-[#c8cacc]'}`;
            const slot = `mx-[2px] border ${sel ? 'border-[#5c5e60] bg-[#747678]' : 'border-[#1b1d1e] bg-[#222426]'}`;
            const fx = i < 16;
            const icon = (name, lit) => `<span class="ml-auto grid h-full w-[18px] place-items-center border-l ${sel ? 'border-[#66686a]' : 'border-[#2e3133]'} ${lit ? 'text-[#4ba6ea]' : ''}">${svg(name, 'size-[13px]')}</span>`;
            const send = (name, gap) => fx
                ? `<div class="mx-[2px] ${gap} flex h-[35px] border-t ${sel ? 'border-[#b98568] bg-[#ac7a5c]' : 'border-[#9c6440] bg-[#845234]'} text-[#e2cfc4]">
                       <i class="mt-[20px] w-[4px] bg-[#d86c34]"></i>
                       <div class="flex flex-1 flex-col justify-between pt-[2px] pr-[5px] pl-[2px]"><span>${name}</span><span class="self-end leading-[15px]">-oo</span></div>
                   </div>`
                : `<div class="${slot} ${gap} h-[35px]"></div>`;
            return `<div class="border-r border-black pt-[4px] pb-[12px] ${sel ? 'bg-[#a2a3a5]' : ''}">
                <button class="${head} w-[calc(100%-4px)]">Routing<span class="ml-auto pr-[4px]">${svg('route', 'size-[12px]')}</span></button>
                <button class="${head} mt-[8px] w-[calc(100%-4px)]">Inserts${icon('insert', sel)}</button>
                ${sel ? '<div class="mx-[2px] mt-[8px] h-[18px] bg-[#398a9e] pl-[4px] leading-[18px] whitespace-nowrap text-[#cfe8ee]">!!! Classic E...!!</div>' : `<div class="${slot} mt-[8px] h-[18px]"></div>`}
                <div class="${slot} mt-[4px] h-[18px]"></div>
                <div class="mt-[11px] border-t border-black"></div>
                <button class="${head} mt-[8px] w-[calc(100%-4px)]">Sends${icon('send', fx)}</button>
                ${send('EFFECTS', 'mt-[7px]')}
                ${send('FX 2', 'mt-[4px]')}
                <div class="${slot} mt-[4px] h-[35px]"></div>
                <div class="mt-[3px] border-t border-black"></div>
                <button class="${head} mt-[8px] w-[calc(100%-4px)]">VCA<span class="ml-auto pr-[3px]">${svg('vca', 'size-[13px]')}</span></button>
            </div>`;
        }

        function foot(ch, sel) {
            const [name, color, , , , , , num] = ch;
            const type = name === 'MIDI 01' ? 'midi' : num > 30 ? 'bus' : 'wave';
            const width = num >= 17 ? svg('stereo', 'size-[12px]') : svg('mono', 'size-[12px]');
            return `<div class="flex h-[24px] shrink-0 items-center pr-[7px] pl-[4px] ${sel ? 'text-[#1b1d1f]' : 'text-[#b0b2b4]'}">
                    ${svg(type, 'size-[13px]')}<span class="ml-[7px]">${type === 'midi' ? '' : width}</span><span class="ml-auto">${num}</span>
                </div>
                <div class="flex h-[35px] shrink-0 items-center pl-[4px] text-black/70 ${sel ? 'border-b-[7px] bg-[#ececec]!' : ''} ${name.length > 11 ? 'text-[11px] leading-[14px]' : ''}" style="background:${color};border-color:${color}">${name}</div>`;
        }

        document.getElementById('racks').innerHTML = channels.map(rack).join('');
        document.getElementById('faders').innerHTML = channels.map((ch, i) => `
            <div class="flex min-w-0 flex-col border-r border-black ${i === 0 ? 'bg-[#a2a3a5]' : ''}">
                <div class="flex min-h-0 flex-1 flex-col px-[3px] pt-[2px]">${strip(ch, wide, i === 0)}</div>
                ${foot(ch, i === 0)}
            </div>`).join('');
        document.getElementById('channel').innerHTML = strip(channels[0], slim, false) + `
            <div class="flex h-[26px] shrink-0 items-center justify-between px-[4px]">${svg('wave', 'size-[13px]')}<span class="pr-[6px]">1</span></div>
            <div class="h-[34px] shrink-0 bg-[#a054ec] pl-[4px] leading-[30px] text-black/70">KICK</div>`;

        // Tool buttons
        const tools = ['pointer', 'range', 'pencil', 'eraser', 'scissors', 'glue', 'cross', 'zoom', 'hand', 'comp', 'line', 'speaker', 'warp'];
        document.getElementById('tools').innerHTML = tools.map((t, i) =>
            `<button aria-label="${t}" class="grid flex-1 place-items-center ${i ? '' : 'bg-[#dcddde] text-[#222]'}">${svg(t, 'size-[17px]')}</button>`).join('');

        // Status line
        const status = [['Audio Inputs', 'Not Connected', 170], ['Audio Outputs', 'Connected', 155], ['Control Room', 'Connected', 152], ['Max. Record Time', '72 hours 27 mins', 202], ['Record Format', '44.1 kHz - 24 bit', 184], ['Project Frame Rate', '30 fps', 153], ['Project Audio Pull', 'Off', 134], ['Project Pan Law', '-3dB', 132]];
        document.getElementById('status').innerHTML = status.map(([k, v, w], i) =>
            `<div class="flex h-[19px] items-center justify-between bg-[#36393b] px-[8px] text-[11px] whitespace-nowrap" style="width:${w}px"><dt>${k}</dt><dd class="font-semibold ${i ? 'text-[#e2e3e4]' : 'text-[#ef9234]'}">${v}</dd></div>`).join('');

        // Info line
        const info = [['File', 'TheOutfield-Y...only(Stems)_2', 168], ['Description', 'TheOutfield-You...ckonly(Stems)_2', 192], ['Start', '0:00:42.000', 97], ['End', '0:00:49.205', 96], ['Length', '0:00:07.205', 95], ['Snap', '0:00:42.000', 96], ['Fade-In', '0:00:00.000', 98], ['Fade-Out', '0:00:00.000', 97], ['Volume', '0.00', 96], ['Invert Phase', 'Off', 96], ['Transpose', '0', 97], ['Fine-Tune', '0', 98], ['Mute', '-', 97]];
        document.getElementById('infoline').innerHTML = info.map(([k, v, w], i) => {
            const side = v.includes(':') ? 'text-right pr-[5px] font-bold' : k === 'Volume' ? 'flex justify-between px-[10px] font-bold' : i < 2 ? 'pl-[6px] text-[10px] font-bold' : 'text-center font-bold';
            return `<div class="h-[36px] border-r border-[#77797c] text-[11px] whitespace-nowrap" style="width:${w}px"><dt class="text-center text-[#a6a8aa]">${k}</dt><dd class="${side} mt-[3px] text-white">${v}${k === 'Volume' ? '<span class="font-normal text-[#a6a8aa]">dB</span>' : ''}</dd></div>`;
        }).join('');

        // Track list, the last visible row shows its name only
        const box = 'flex h-[19px] items-center justify-around border px-[3px]';
        document.getElementById('tracks').innerHTML = channels.slice(0, 3).map((ch, i) => {
            const tone = i ? 'border-[#17191a] bg-[#2b2e30]' : 'border-[#707274] bg-[#a2a3a5] text-[#1b1d1f]';
            const controls = `<div class="mt-[2px] flex gap-[3px]">
                        <div class="${box} ${tone} w-[46px]"><button aria-label="Record" class="text-[#77797c]">${svg('dot', 'size-[13px]')}</button><button aria-label="Monitor" class="text-[#77797c]">${svg('monitor', 'size-[13px]')}</button></div>
                        <div class="${box} ${tone} w-[46px]"><button aria-label="Edit">${svg('edit', 'size-[14px]')}</button>${svg('mono', 'size-[12px]')}</div>
                        <div class="${box} ${tone} w-[46px] font-bold"><button>R</button><button>W</button></div>
                        <div class="${box} ${tone} w-[23px]"><button aria-label="Lanes">${svg('lanes', 'size-[14px]')}</button></div>
                    </div>`;
            return `<div class="flex ${i === 2 ? 'h-[17px]' : 'h-[45px] border-b border-black'} ${i ? 'bg-[#26292b]' : 'bg-[#a2a3a5] text-[#2b2d2f]'}">
                <div class="flex w-[39px] justify-between px-[4px] ${i === 2 ? 'pt-px' : 'pt-[4px]'} text-black/70" style="background:${ch[1]}">${svg('wave', 'size-[15px]')}<span>${ch[7]}</span></div>
                <div class="w-[60px] ${i === 2 ? '' : 'pt-[3px]'} pl-[5px]"><div class="grid ${i === 2 ? 'h-[17px]' : 'h-[18px]'} w-[49px] grid-cols-2 border ${tone} text-[13px] leading-4 font-bold"><button>M</button><button>S</button></div></div>
                <div class="flex-1 ${i === 2 ? 'pt-px' : 'pt-[5px]'}">
                    <div>${ch[0]}</div>
                    ${i === 2 ? '' : controls}
                </div>
                <div class="flex w-[10px] items-end bg-[#0b0c0d]"><div class="w-full ${['h-[24px]', 'h-[35px]', 'h-[2px]'][i]} bg-[linear-gradient(#ee7000,#c85a04)]"></div></div>
            </div>`;
        }).join('');

        // Ruler, grid and events; positions run in seconds over the visible range
        const total = 144.3;
        const at = s => 0.38 + s / total * 99.62;
        const clock = s => s < 60 ? s : `${Math.floor(s / 60)}:${String(s % 60).padStart(2, '0')}`;
        let ruler = '';
        for (let s = 0; s <= 144; s++) {
            const major = s % 10 === 0, mid = s % 5 === 0;
            ruler += `<i class="absolute ${major ? 'top-[4px] h-[23px] bg-[#a6a8aa]' : mid ? 'top-[4px] h-[9px] bg-[#85878a]' : 'top-[4px] h-[9px] bg-[#505255]'} w-px" style="left:${at(s)}%"></i>
                <i class="absolute top-[31px] bottom-0 w-px ${major ? 'bg-[#505255]' : mid ? 'bg-[#3c3f41]' : 'bg-[#2c2f31]'}" style="left:${at(s)}%"></i>
                ${major ? `<span class="absolute top-[11px] pl-[4px] text-[11px]" style="left:${at(s)}%">${clock(s)}</span>` : ''}`;
        }

        let seed = 7;
        const rnd = () => (seed = (seed * 16807) % 2147483647) / 2147483647;
        const levels = {
            bass: s => s < 33.9 ? 0.4 : s < 99.4 ? 1.4 : s < 131 ? 0.5 : 1.4,
            drums: s => {
                if (s < 33.9) return 0.4;
                if (s < 36.500 || s >= 128.8) return 3 + rnd() * 3;
                if (s < 50) return 1 + Math.max(0, 1 - (s % 1.05) * 1.500) * (3 + rnd() * 2);
                if (s < 99.4) return 1.500 + rnd() * 3.500;
                return 0.6 + Math.max(0, 1 - (s % 1.6) * 1.600) * (2 + rnd() * 4);
            },
            extras: s => s < 50.500 ? 0.4 : s < 99 ? 0.8 + rnd() * 1.500 : s < 131 ? 0.5 : 1 + rnd(),
        };
        function waveform(kind, mid) {
            let up = '', down = '';
            for (let x = 0; x <= 2112; x += 2) {
                const a = levels[kind](x / 2112 * total);
                up += `L${x} ${(mid - a).toFixed(1)}`;
                down = `L${x} ${(mid + a).toFixed(1)}` + down;
            }
            return `<path d="M0 ${mid}${up}${down}Z"/>`;
        }
        const events = [
            ['The Outfield - Your love Bass track only (Stems) 48000 1', 'bass', 'top-[57px] h-[43px] border-[#9d5cf0] bg-[#8449c2]', 'bg-[#9b56ea]', '#5a1ca8', '#6c2fc8'],
            ['The Outfield - Your love Drums track Only (Stems) 48000 2', 'drums', 'top-[102px] h-[43px] border-[#cf5cec] bg-[#a838bf]', 'bg-[#c844e4]', '#7d0f92', '#9026b0'],
            ['The Outfield -Your love ExtrasTrack Only (Stems) 48000 2', 'extras', 'top-[147px] h-[17px] border-[#ea48c4] border-b-0 bg-[#bb2f93]', 'bg-[#de36b6]', '#8b0c60', '#a81f80'],
        ];
        document.getElementById('timeline').innerHTML = `
            <div class="absolute inset-x-0 top-[28px] bottom-0 border-t-2 border-[#303336] bg-[#23272a]"></div>${ruler}
            ${events.map(([label, kind, cls, tag, ink, grid]) => `
                <div class="absolute right-0 left-[8px] overflow-hidden border-y-2 ${cls}">
                    <svg class="absolute inset-0 h-[39px] w-full" viewBox="0 0 2112 39" preserveAspectRatio="none">
                        <g stroke="${grid}" stroke-width="1">${Array.from({ length: 144 }, (_, i) => `<path d="M${(i + 1) / total * 2112} 0v39"/>`).join('')}</g>
                        <g fill="${ink}">${waveform(kind, 10)}${waveform(kind, 29)}</g>
                    </svg>
                    <span class="relative block h-[15px] w-max ${tag} px-[4px] text-[11px] leading-[15px] font-semibold text-[#16041f]">${label}</span>
                    ${kind === 'extras' ? '' : `<i class="absolute top-[21px] left-[13px] h-[14px] w-[10px] ${tag}"></i>
                    <i class="absolute top-[27px] left-[15px] size-[7px] bg-[#2a0b3a] [clip-path:polygon(100%_0,100%_100%,0_100%)]"></i>`}
                </div>`).join('')}
            <i class="absolute top-[4px] left-0 h-[9px] w-[16px] bg-white [clip-path:polygon(0_0,100%_0,50%_100%)]"></i>
            <i class="absolute top-[4px] bottom-0 w-[2px] bg-[#27d9e0]" style="left:${at(70.9)}%"></i>`;

        // Media browser tiles
        const tiles = [
            ['VST Instruments', '<path fill="#26292b" d="M12 14h9v26h6v16H12zM31 14h8v26h4v16H28V40h3zM49 14h9v42H44V40h5z"/>'],
            ['VST Effects', '<text x="35" y="49" text-anchor="middle" font-size="38" font-weight="700" font-family="Roboto" fill="#26292b">FX</text>'],
            ['Loops & Samples', '<path d="M19 17h18a18 18 0 1 1-17 21" fill="none" stroke="#26292b" stroke-width="6"/><path d="M11 39h17l-8-13z" fill="#26292b"/>'],
            ['Presets', '<path fill="#26292b" d="M10 28l8-13h14l8 13-8 13H18zM36 43l6-10h12l6 10-6 11H42z"/>'],
            ['User Presets', '<path fill="#26292b" d="M12 28l8-14h14l8 14-8 14H20z"/><circle cx="42" cy="34" r="8" fill="#26292b" stroke="#a6aaad" stroke-width="2"/><path fill="#26292b" stroke="#a6aaad" d="M30 55c0-8 3-13 7-13h10c4 0 7 5 7 13z"/>'],
            ['File Browser', '<rect x="9" y="20" width="52" height="20" rx="3" fill="#26292b"/><circle cx="46" cy="30" r="2.500" fill="#a6aaad"/><circle cx="54" cy="30" r="2.500" fill="#a6aaad"/><circle cx="28" cy="40" r="11" fill="#a6aaad"/><circle cx="28" cy="40" r="7.500" fill="none" stroke="#26292b" stroke-width="3.500"/><path d="M33 45l9 9" stroke="#26292b" stroke-width="4"/>'],
            ['Favorites', '<path fill="#26292b" stroke="#26292b" stroke-width="2" stroke-linejoin="round" d="M35 13l5.500 16H58L44 39l6 17-15-11-15 11 6-17-14-10h17.500z"/>'],
        ];
        document.getElementById('media').innerHTML = tiles.map(([label, art]) => `
            <button class="flex h-[121px] flex-col items-center whitespace-nowrap">
                <svg viewBox="0 0 70 70" class="mb-[10px] size-[70px] rounded-xs bg-[#a6aaad]">${art}</svg>${label}
            </button>`).join('');
    </script>
</body>
</html>
